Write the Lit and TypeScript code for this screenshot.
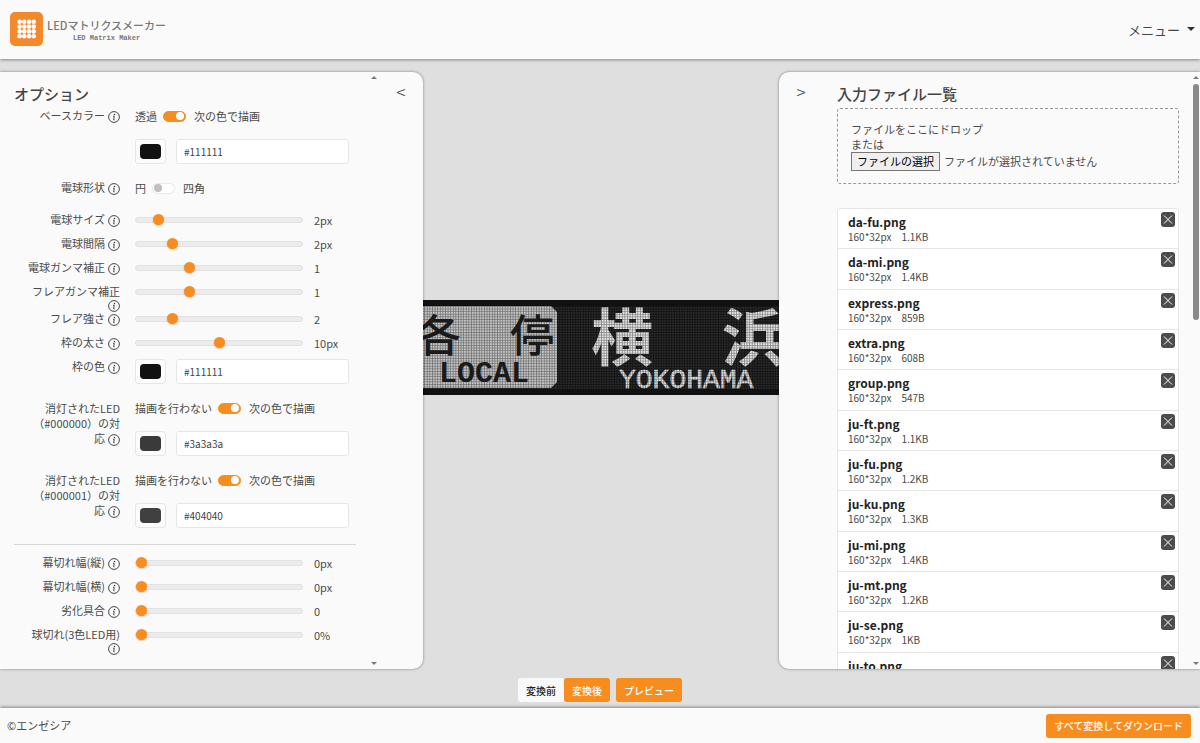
import { LitElement, html, css, svg } from "lit";
import { customElement, property, state } from "lit/decorators.js";

interface SliderSpec {
  id: string;
  label: string;
  min: number;
  max: number;
  step: number;
  value: number;
  unit: string;
}

const bulbSliders: SliderSpec[] = [
  { id: "size", label: "電球サイズ", min: 1, max: 10, step: 1, value: 2, unit: "px" },
  { id: "gap", label: "電球間隔", min: 0, max: 10, step: 1, value: 2, unit: "px" },
  { id: "gamma", label: "電球ガンマ補正", min: 0.1, max: 3, step: 0.1, value: 1, unit: "" },
  { id: "flare-gamma", label: "フレアガンマ補正", min: 0.1, max: 3, step: 0.1, value: 1, unit: "" },
  { id: "flare", label: "フレア強さ", min: 0, max: 10, step: 1, value: 2, unit: "" },
  { id: "frame", label: "枠の太さ", min: 0, max: 20, step: 1, value: 10, unit: "px" },
];

const wearSliders: SliderSpec[] = [
  { id: "cut-v", label: "幕切れ幅(縦)", min: 0, max: 20, step: 1, value: 0, unit: "px" },
  { id: "cut-h", label: "幕切れ幅(横)", min: 0, max: 20, step: 1, value: 0, unit: "px" },
  { id: "wear", label: "劣化具合", min: 0, max: 10, step: 1, value: 0, unit: "" },
  { id: "burnt", label: "球切れ(3色LED用)", min: 0, max: 100, step: 1, value: 0, unit: "%" },
];

const files: [string, string][] = [
  ["da-fu.png", "1.1KB"],
  ["da-mi.png", "1.4KB"],
  ["express.png", "859B"],
  ["extra.png", "608B"],
  ["group.png", "547B"],
  ["ju-ft.png", "1.1KB"],
  ["ju-fu.png", "1.2KB"],
  ["ju-ku.png", "1.3KB"],
  ["ju-mi.png", "1.4KB"],
  ["ju-mt.png", "1.2KB"],
  ["ju-se.png", "1KB"],
  ["ju-to.png", "1.1KB"],
];

const infoIcon = html`<svg class="info" viewBox="0 0 12 12" aria-hidden="true">
  <circle cx="6" cy="6" r="5.4" fill="none" stroke="#333" stroke-width="0.9" />
  <circle cx="6.5" cy="3.4" r="0.75" fill="#333" />
  <path d="M5 5.2h1.2L5.7 8.8q.1.4.9.1" fill="none" stroke="#333" stroke-width="0.9" />
</svg>`;

const base = css`
  * {
    box-sizing: border-box;
  }
  button,
  input {
    font-family: inherit;
    margin: 0;
  }
`;

@customElement("option-row")
class OptionRow extends LitElement {
  @property() label = "";
  @property({ type: Boolean }) tall = false;

  static styles = [
    base,
    css`
      :host {
        display: grid;
        grid-template-columns: 106px minmax(0, 1fr);
        column-gap: 15px;
        min-height: 24px;
      }
      .label {
        padding: 5px 0 0 10px;
        margin-bottom: -5px;
        line-height: 13px;
        text-align: right;
      }
      :host([tall]) .label {
        line-height: 15px;
      }
      .info {
        width: 12px;
        height: 12px;
        margin-left: 3px;
        vertical-align: -3px;
      }
    `,
  ];

  render() {
    return html`<div class="label">${this.label}${infoIcon}</div><slot></slot>`;
  }
}

@customElement("range-field")
class RangeField extends LitElement {
  @property({ attribute: false }) spec!: SliderSpec;
  @state() private value = 0;

  willUpdate(changed: Map<string, unknown>) {
    if (changed.has("spec")) this.value = this.spec.value;
  }

  static styles = [
    base,
    css`
      :host {
        display: grid;
        grid-template-columns: minmax(0, 168fr) minmax(0, 42fr);
        column-gap: 11px;
        height: 24px;
        align-items: center;
      }
      .range {
        appearance: none;
        width: 100%;
        height: 22px;
        background: transparent;
      }
      .range::-webkit-slider-runnable-track {
        height: 6px;
        border: 1px solid #e2e2e2;
        border-radius: 3px;
        background: #ececec;
      }
      .range::-webkit-slider-thumb {
        appearance: none;
        width: 11px;
        height: 11px;
        margin-top: -4px;
        border-radius: 50%;
        background: #f78c1f;
        box-shadow: 0 1px 2px rgba(0, 0, 0, 0.2);
      }
      .value {
        line-height: 16px;
      }
    `,
  ];

  render() {
    const s = this.spec;
    return html`<input class="range" type="range" aria-label=${s.label}
        min=${s.min} max=${s.max} step=${s.step} .value=${String(this.value)}
        @input=${(e: Event) => (this.value = Number((e.target as HTMLInputElement).value))} />
      <output class="value">${this.value}${s.unit}</output>`;
  }
}

@customElement("toggle-field")
class ToggleField extends LitElement {
  @property() off = "";
  @property() on = "";
  @property({ type: Boolean }) checked = false;

  static styles = [
    base,
    css`
      :host {
        display: block;
      }
      .toggle {
        display: flex;
        align-items: center;
        height: 24px;
      }
      .switch {
        appearance: none;
        display: flex;
        align-items: center;
        width: 23px;
        height: 11px;
        margin: 0 8px 0 6px;
        padding: 0 1px;
        border: 1px solid #e8e8e8;
        border-radius: 6px;
        background: #fff;
      }
      .switch::before {
        content: "";
        width: 8px;
        height: 8px;
        border-radius: 50%;
        background: #bfbfbf;
      }
      .switch:checked {
        justify-content: flex-end;
        border-color: #f78c1f;
        background: #f78c1f;
      }
      .switch:checked::before {
        background: #fff;
      }
    `,
  ];

  render() {
    return html`<label class="toggle"><span>${this.off}</span>
      <input class="switch" type="checkbox" role="switch" .checked=${this.checked} />
      <span>${this.on}</span></label>`;
  }
}

@customElement("color-field")
class ColorField extends LitElement {
  @property() value = "#111111";
  @property() label = "";

  static styles = [
    base,
    css`
      :host {
        display: flex;
        gap: 10px;
      }
      .swatch,
      .hex {
        height: 25px;
        border: 1px solid #e6e6e6;
        border-radius: 3px;
        background: #fff;
      }
      .swatch {
        appearance: none;
        flex: none;
        width: 31px;
        padding: 4px;
        background: #fcfcfc;
      }
      .swatch::-webkit-color-swatch-wrapper {
        padding: 0;
      }
      .swatch::-webkit-color-swatch {
        border: 0;
        border-radius: 4px;
      }
      .hex {
        flex: 0 1 173px;
        min-width: 0;
        padding: 0 7px;
        font-size: 10px;
        color: #444;
      }
    `,
  ];

  private pick(e: Event) {
    this.value = (e.target as HTMLInputElement).value;
  }

  render() {
    return html`<input class="swatch" type="color" aria-label=${this.label}
        .value=${this.value} @input=${this.pick} />
      <input class="hex" type="text" aria-label="${this.label} HEX"
        .value=${this.value} @change=${this.pick} />`;
  }
}

@customElement("led-sign")
class LedSign extends LitElement {
  static styles = css`
    :host {
      display: block;
      flex: none;
    }
    .sign {
      display: block;
      width: 428px;
      height: 95px;
    }
    .cjk {
      font-family: "Noto Sans CJK JP", sans-serif;
    }
    .mono {
      font-family: "Liberation Mono", monospace;
    }
  `;

  render() {
    return html`<svg class="sign" viewBox="0 0 428 95" role="img" aria-label="各停 横浜">
      ${svg`<defs>
        <pattern id="bulbs" width="2.6" height="2.6" patternUnits="userSpaceOnUse" x="6" y="6">
          <path d="M0 0H2.6V.7H.7V2.6H0Z" fill="#111" fill-opacity=".5"/>
        </pattern>
        <pattern id="unlit" width="2.6" height="2.6" patternUnits="userSpaceOnUse" x="6" y="6">
          <rect x=".7" y=".7" width="1.9" height="1.9" fill="#2b2b2b"/>
        </pattern>
      </defs>
      <rect width="428" height="95" fill="#111"/>
      <rect x="6" y="6" width="416" height="83" fill="url(#unlit)"/>
      <path d="M12 6H164L170 12V82L164 88H12L6 82V12Z" fill="#c4c4c4"/>
      <g class="cjk" font-weight="500" font-size="44" fill="#1c1c1c">
        <text x="30" y="52">各</text>
        <text x="123" y="52">停</text>
      </g>
      <text class="mono" x="52" y="82" font-size="30" font-weight="700" fill="#1c1c1c">LOCAL</text>
      <g class="cjk" font-weight="700" font-size="62" fill="#e4e4e4">
        <text x="204" y="61">横</text>
        <text x="335" y="61">浜</text>
      </g>
      <text class="mono" x="232" y="88" font-size="28" fill="#e4e4e4" stroke="#e4e4e4" stroke-width=".6">YOKOHAMA</text>
      <rect x="6" y="6" width="416" height="83" fill="url(#bulbs)"/>`}
    </svg>`;
  }
}

@customElement("app-root")
class AppRoot extends LitElement {
  @state() private list = files;

  static styles = [
    base,
    css`
      :host {
        display: flex;
        flex-direction: column;
        height: 100vh;
        overflow: hidden;
        background: #dfdfdf;
        color: #4a4a4a;
        font: 11px/15px "Noto Sans CJK JP", "Noto Sans", sans-serif;
      }
      .header {
        display: flex;
        align-items: center;
        justify-content: space-between;
        height: 59px;
        flex: none;
        padding: 0 5px 1px 10px;
        background: #fafafa;
        box-shadow: 0 1px 3px rgba(0, 0, 0, 0.4);
      }
      .brand {
        display: flex;
        align-items: center;
        gap: 4px;
        color: #777;
        text-decoration: none;
      }
      .logo {
        width: 33px;
        height: 34px;
      }
      .brand-text {
        display: flex;
        flex-direction: column;
        align-items: center;
      }
      .brand-name {
        font-size: 11px;
        line-height: 18px;
        font-weight: 500;
      }
      .brand-sub {
        font: 700 7px/8px "Liberation Mono", monospace;
      }
      .menu {
        display: flex;
        align-items: center;
        gap: 7px;
        padding: 0;
        border: 0;
        background: none;
        color: #444;
        font-size: 13px;
      }
      .menu::after {
        content: "";
        border: 4px solid transparent;
        border-top-color: #333;
        border-bottom: 0;
      }
      .main {
        flex: 1;
        min-height: 0;
        display: grid;
        grid-template-rows: minmax(0, 1fr) 24px;
        row-gap: 9px;
        padding: 13px 0 6px;
      }
      .work {
        display: grid;
        grid-template-columns: minmax(0, 423fr) minmax(0, 356fr) minmax(0, 421fr);
        min-height: 0;
      }
      .panel {
        display: flex;
        min-height: 0;
        background: #fafafa;
        box-shadow: 0 0 3px rgba(0, 0, 0, 0.45);
        overflow: hidden;
        z-index: 1;
      }
      .panel-left {
        border-radius: 0 10px 10px 0;
      }
      .panel-right {
        border-radius: 10px 0 0 10px;
      }
      .title {
        margin: 0;
        font-size: 15px;
        line-height: 21px;
        font-weight: 500;
        color: #444;
      }
      .options {
        flex: 1;
        min-width: 0;
        padding: 11px 13px 0 14px;
        overflow: hidden;
      }
      .fold {
        flex: none;
        align-self: flex-start;
        width: 44px;
        padding: 10px 0 0;
        border: 0;
        background: none;
        color: #444;
        font-size: 17px;
        font-weight: 300;
        line-height: 20px;
      }
      .double {
        display: grid;
        row-gap: 11px;
        align-content: start;
        padding-bottom: 12px;
      }
      .single {
        padding-bottom: 8px;
      }
      .frame-color {
        padding: 4px 0 12px;
      }
      .rule {
        margin: 4px 0 6px;
        border: 0;
        border-top: 1px solid #d6d6d6;
      }
      .scroll {
        flex: none;
        display: flex;
        flex-direction: column;
        align-items: center;
        padding: 4px 0;
        width: 10px;
      }
      .scroll::before,
      .scroll::after {
        content: "";
        border: 3px solid transparent;
      }
      .scroll::before {
        border-top: 0;
        border-bottom-color: #7a7a7a;
      }
      .scroll::after {
        margin-top: auto;
        border-bottom: 0;
        border-top-color: #7a7a7a;
      }
      .panel-right .scroll {
        width: 8px;
      }
      .thumb {
        width: 6px;
        height: 40%;
        margin-top: 5px;
        border-radius: 3px;
        background: #8a8a8a;
      }
      .preview {
        display: flex;
        align-items: center;
        justify-content: center;
        overflow: hidden;
        padding-bottom: 46px;
      }
      .inputs {
        flex: 1;
        min-width: 0;
        padding: 11px 13px 0 14px;
        overflow: hidden;
      }
      .drop {
        margin: 4px 0 24px;
        padding: 13px 13px 12px;
        border: 1px dashed #999;
        border-radius: 3px;
      }
      .pick {
        display: flex;
        align-items: center;
        gap: 4px;
      }
      .file-button {
        height: 19px;
        padding: 0 5px;
        border: 1px solid #777;
        border-radius: 0;
        background: #efefef;
        color: #000;
        font-size: 11px;
        line-height: 15px;
      }
      .files {
        display: grid;
        grid-auto-rows: 1fr;
        min-height: 486px;
        margin: 0;
        padding: 0;
        border: 1px solid #e6e6e6;
        border-radius: 3px;
        background: #fff;
        list-style: none;
      }
      .file {
        display: flex;
        justify-content: space-between;
        padding: 5px 3px 0 10px;
        border-bottom: 1px solid #e6e6e6;
      }
      .name {
        font-size: 12px;
        line-height: 16px;
        font-weight: 700;
        color: #222;
      }
      .meta {
        display: flex;
        gap: 10px;
        font-size: 10px;
        line-height: 14px;
      }
      .remove {
        flex: none;
        align-self: flex-start;
        width: 14px;
        height: 15px;
        margin-top: -2px;
        padding: 0;
        border: 0;
        border-radius: 3px;
        background: #4c4c4c;
      }
      .remove svg {
        display: block;
        width: 14px;
        height: 15px;
      }
      .actions {
        display: flex;
        justify-content: center;
        gap: 6px;
      }
      .pair {
        display: flex;
      }
      .btn {
        height: 24px;
        padding: 0 8px;
        border: 0;
        border-radius: 3px;
        background: #f78c1f;
        color: #fff;
        font-size: 10px;
        font-weight: 500;
      }
      .btn.plain {
        background: #f8f9fa;
        color: #222;
      }
      .footer {
        flex: none;
        display: flex;
        align-items: center;
        justify-content: space-between;
        height: 35px;
        padding: 0 9px 0 7px;
        background: #fafafa;
        box-shadow: 0 -1px 3px rgba(0, 0, 0, 0.4);
      }
    `,
  ];

  private sliderRow(spec: SliderSpec) {
    return html`<option-row label=${spec.label}><range-field .spec=${spec}></range-field></option-row>`;
  }

  private remove(name: string) {
    this.list = this.list.filter(([n]) => n !== name);
  }

  private pickFiles() {
    this.renderRoot.querySelector<HTMLInputElement>("#file")?.click();
  }

  private get logo() {
    const dots = [0, 1, 2, 3].flatMap((y) =>
      [0, 1, 2, 3].map((x) => svg`<circle cx=${9.6 + x * 4.7} cy=${9.8 + y * 4.8} r="2.3" fill="#fff"/>`)
    );
    return html`<svg class="logo" viewBox="0 0 33 34" aria-hidden="true">
      <rect width="33" height="34" rx="5" fill="#f3892a" />${dots}
    </svg>`;
  }

  render() {
    return html`
      <header class="header">
        <a class="brand" href="#">
          ${this.logo}
          <span class="brand-text">
            <span class="brand-name">LEDマトリクスメーカー</span>
            <span class="brand-sub">LED Matrix Maker</span>
          </span>
        </a>
        <button class="menu" type="button">メニュー</button>
      </header>
      <main class="main">
        <div class="work">
          <section class="panel panel-left">
            <div class="options">
              <h2 class="title">オプション</h2>
              <option-row label="ベースカラー">
                <div class="double">
                  <toggle-field off="透過" on="次の色で描画" checked></toggle-field>
                  <color-field label="ベースカラー" value="#111111"></color-field>
                </div>
              </option-row>
              <option-row label="電球形状">
                <div class="single"><toggle-field off="円" on="四角"></toggle-field></div>
              </option-row>
              ${bulbSliders.map((s) => this.sliderRow(s))}
              <option-row label="枠の色">
                <div class="frame-color"><color-field label="枠の色" value="#111111"></color-field></div>
              </option-row>
              <option-row tall label="消灯されたLED（#000000）の対応">
                <div class="double">
                  <toggle-field off="描画を行わない" on="次の色で描画" checked></toggle-field>
                  <color-field label="消灯色 #000000" value="#3a3a3a"></color-field>
                </div>
              </option-row>
              <option-row tall label="消灯されたLED（#000001）の対応">
                <div class="double">
                  <toggle-field off="描画を行わない" on="次の色で描画" checked></toggle-field>
                  <color-field label="消灯色 #000001" value="#404040"></color-field>
                </div>
              </option-row>
              <hr class="rule" />
              ${wearSliders.map((s) => this.sliderRow(s))}
            </div>
            <div class="scroll"></div>
            <button class="fold" type="button">&lt;</button>
          </section>
          <div class="preview"><led-sign></led-sign></div>
          <section class="panel panel-right">
            <button class="fold" type="button">&gt;</button>
            <div class="inputs">
              <h2 class="title">入力ファイル一覧</h2>
              <div class="drop">
                <div>ファイルをここにドロップ</div>
                <div>または</div>
                <div class="pick">
                  <button class="file-button" type="button" @click=${this.pickFiles}>ファイルの選択</button>
                  <label for="file">ファイルが選択されていません</label>
                  <input id="file" type="file" multiple hidden />
                </div>
              </div>
              <ul class="files">
                ${this.list.map(
                  ([name, size]) => html`<li class="file">
                    <div>
                      <div class="name">${name}</div>
                      <div class="meta"><span>160*32px</span><span>${size}</span></div>
                    </div>
                    <button class="remove" type="button" aria-label="${name} 削除" @click=${() => this.remove(name)}>
                      <svg viewBox="0 0 14 15" aria-hidden="true">
                        <path d="M3 3.5l8 8M11 3.5l-8 8" stroke="#fff" stroke-width="1" />
                      </svg>
                    </button>
                  </li>`
                )}
              </ul>
            </div>
            <div class="scroll"><div class="thumb"></div></div>
          </section>
        </div>
        <div class="actions">
          <div class="pair">
            <button class="btn plain" type="button">変換前</button>
            <button class="btn" type="button">変換後</button>
          </div>
          <button class="btn" type="button">プレビュー</button>
        </div>
      </main>
      <footer class="footer">
        <span>©エンゼシア</span>
        <button class="btn" type="button">すべて変換してダウンロード</button>
      </footer>
    `;
  }
}
